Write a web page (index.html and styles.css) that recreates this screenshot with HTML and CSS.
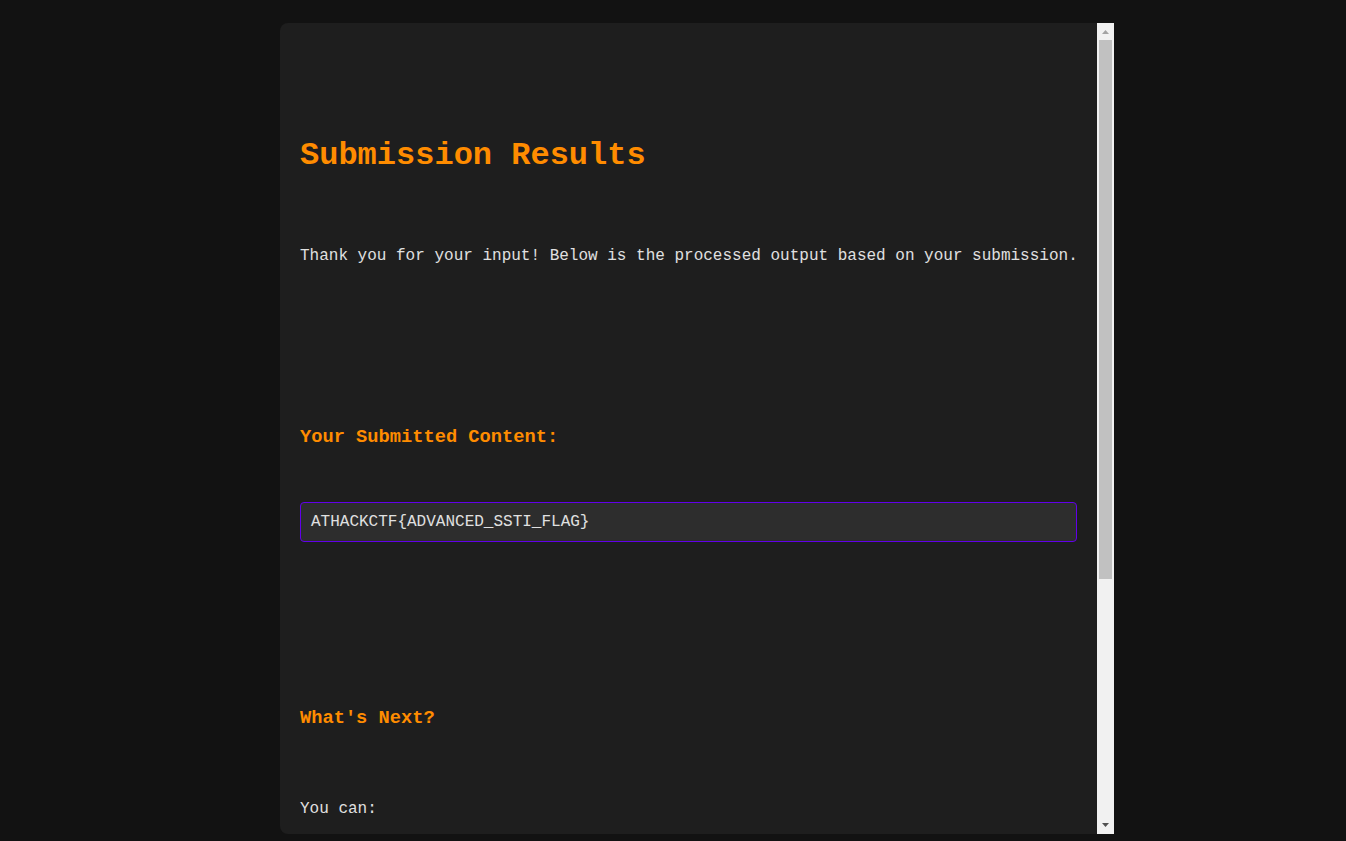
FILE: index.html
```html
<!DOCTYPE html>
<html lang="en">
<head>
<meta charset="utf-8">
<title>Submission Results</title>
<link rel="stylesheet" href="styles.css">
</head>
<body>
<div class="frame">
  <main class="panel">
    <header class="intro">
      <h1 class="title">Submission Results</h1>
      <p class="text text-lead">Thank you for your input! Below is the processed output based on your submission.</p>
    </header>
    <section class="block block-output">
      <h3 class="subtitle subtitle-tight">Your Submitted Content:</h3>
      <div class="output">ATHACKCTF{ADVANCED_SSTI_FLAG}</div>
    </section>
    <section class="block block-next">
      <h3 class="subtitle">What's Next?</h3>
      <p class="text">You can:</p>
    </section>
  </main>
  <div class="scrollbar" aria-hidden="true">
    <div class="sb-button">
      <svg width="17" height="17" viewBox="0 0 17 17"><polygon points="5,11 12,11 8.5,7" fill="#a3a3a3"/></svg>
    </div>
    <div class="sb-track">
      <div class="sb-thumb"></div>
    </div>
    <div class="sb-button">
      <svg width="17" height="17" viewBox="0 0 17 17"><polygon points="5,6 12,6 8.5,10" fill="#505050"/></svg>
    </div>
  </div>
</div>
</body>
</html>
```

FILE: styles.css
```css
html, body {
  margin: 0;
  padding: 0;
}

body {
  background: #121212;
  color: #e0e0e0;
  font-family: "Courier New", "Liberation Mono", monospace;
  font-size: 16px;
  line-height: 1.6;
  padding: 23px 0 7px 280px;
  box-sizing: border-box;
  height: 841px;
  overflow: hidden;
}

.frame {
  display: flex;
  width: 834px;
  height: 811px;
  background: #1e1e1e;
  border-radius: 8px 0 0 8px;
  overflow: hidden;
}

.panel {
  flex: 1;
  min-width: 0;
  box-sizing: border-box;
  padding: 20px 20px 0;
  overflow: hidden;
}

.scrollbar {
  width: 17px;
  flex: none;
  display: flex;
  flex-direction: column;
  background: #f1f1f1;
}

.sb-button {
  height: 17px;
  flex: none;
}

.sb-button svg {
  display: block;
}

.sb-track {
  flex: 1;
  padding: 0 2px;
}

.sb-thumb {
  height: 539px;
  background: #c1c1c1;
}

.title {
  color: #ff8c00;
  font-size: 32px;
  font-weight: bold;
  margin: 87px 0 63px;
}

.text {
  margin: 0;
}

.text-lead {
  white-space: nowrap;
}

.block-output {
  margin-top: 153px;
}

.block-next {
  margin-top: 162px;
}

.subtitle {
  color: #ff8c00;
  font-size: 18.72px;
  font-weight: bold;
  margin: 0 0 63px;
}

.subtitle-tight {
  margin-bottom: 49px;
}

.output {
  background: #2d2d2d;
  border: 1px solid #6200ea;
  border-radius: 4px;
  padding: 10px;
  line-height: normal;
  white-space: pre-wrap;
}
```
